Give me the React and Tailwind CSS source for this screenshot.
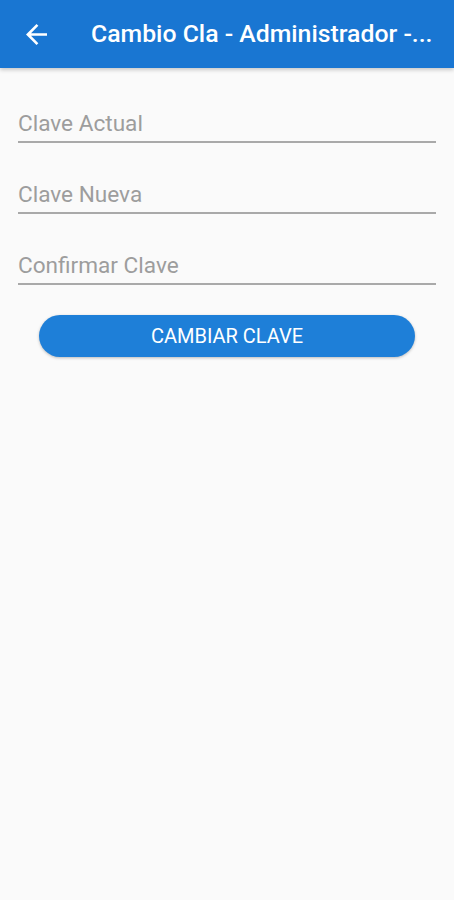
const fields = ["Clave Actual", "Clave Nueva", "Confirmar Clave"];

const BackArrow = () => (
  <svg width="21" height="21" viewBox="4 4 16 16" fill="white">
    <path d="M20 11H7.83l5.59-5.59L12 4l-8 8 8 8 1.41-1.41L7.83 13H20v-2z" />
  </svg>
);

export default function App() {
  return (
    <div
      className="w-[454px] h-[900px] bg-[#fafafa] flex flex-col"
      style={{ fontFamily: "Roboto, 'Noto Sans', sans-serif" }}
    >
      <header className="h-[68px] bg-[#1976d2] flex items-center shadow-[0_2px_4px_rgba(0,0,0,0.2)] shrink-0">
        <div className="w-[91px] pl-[26px] flex items-center">
          <BackArrow />
        </div>
        <h1 className="text-white text-[24.8px] font-medium leading-[28px] whitespace-nowrap">
          Cambio Cla - Administrador -...
        </h1>
      </header>

      <div className="px-[18px] pt-[4px]">
        {fields.map((f) => (
          <div
            key={f}
            className="h-[71px] flex items-end pb-[4px] border-b-2 border-[#a9a9a9]"
          >
            <span className="text-[22.6px] leading-[27px] text-[#9d9d9d]">{f}</span>
          </div>
        ))}

        <div className="px-[21px] mt-[30px]">
          <button className="w-full h-[42px] rounded-full bg-[#1e7fd8] text-white text-[20px] leading-[24px] shadow-[0_1px_3px_rgba(0,0,0,0.25)]">
            CAMBIAR CLAVE
          </button>
        </div>
      </div>
    </div>
  );
}
